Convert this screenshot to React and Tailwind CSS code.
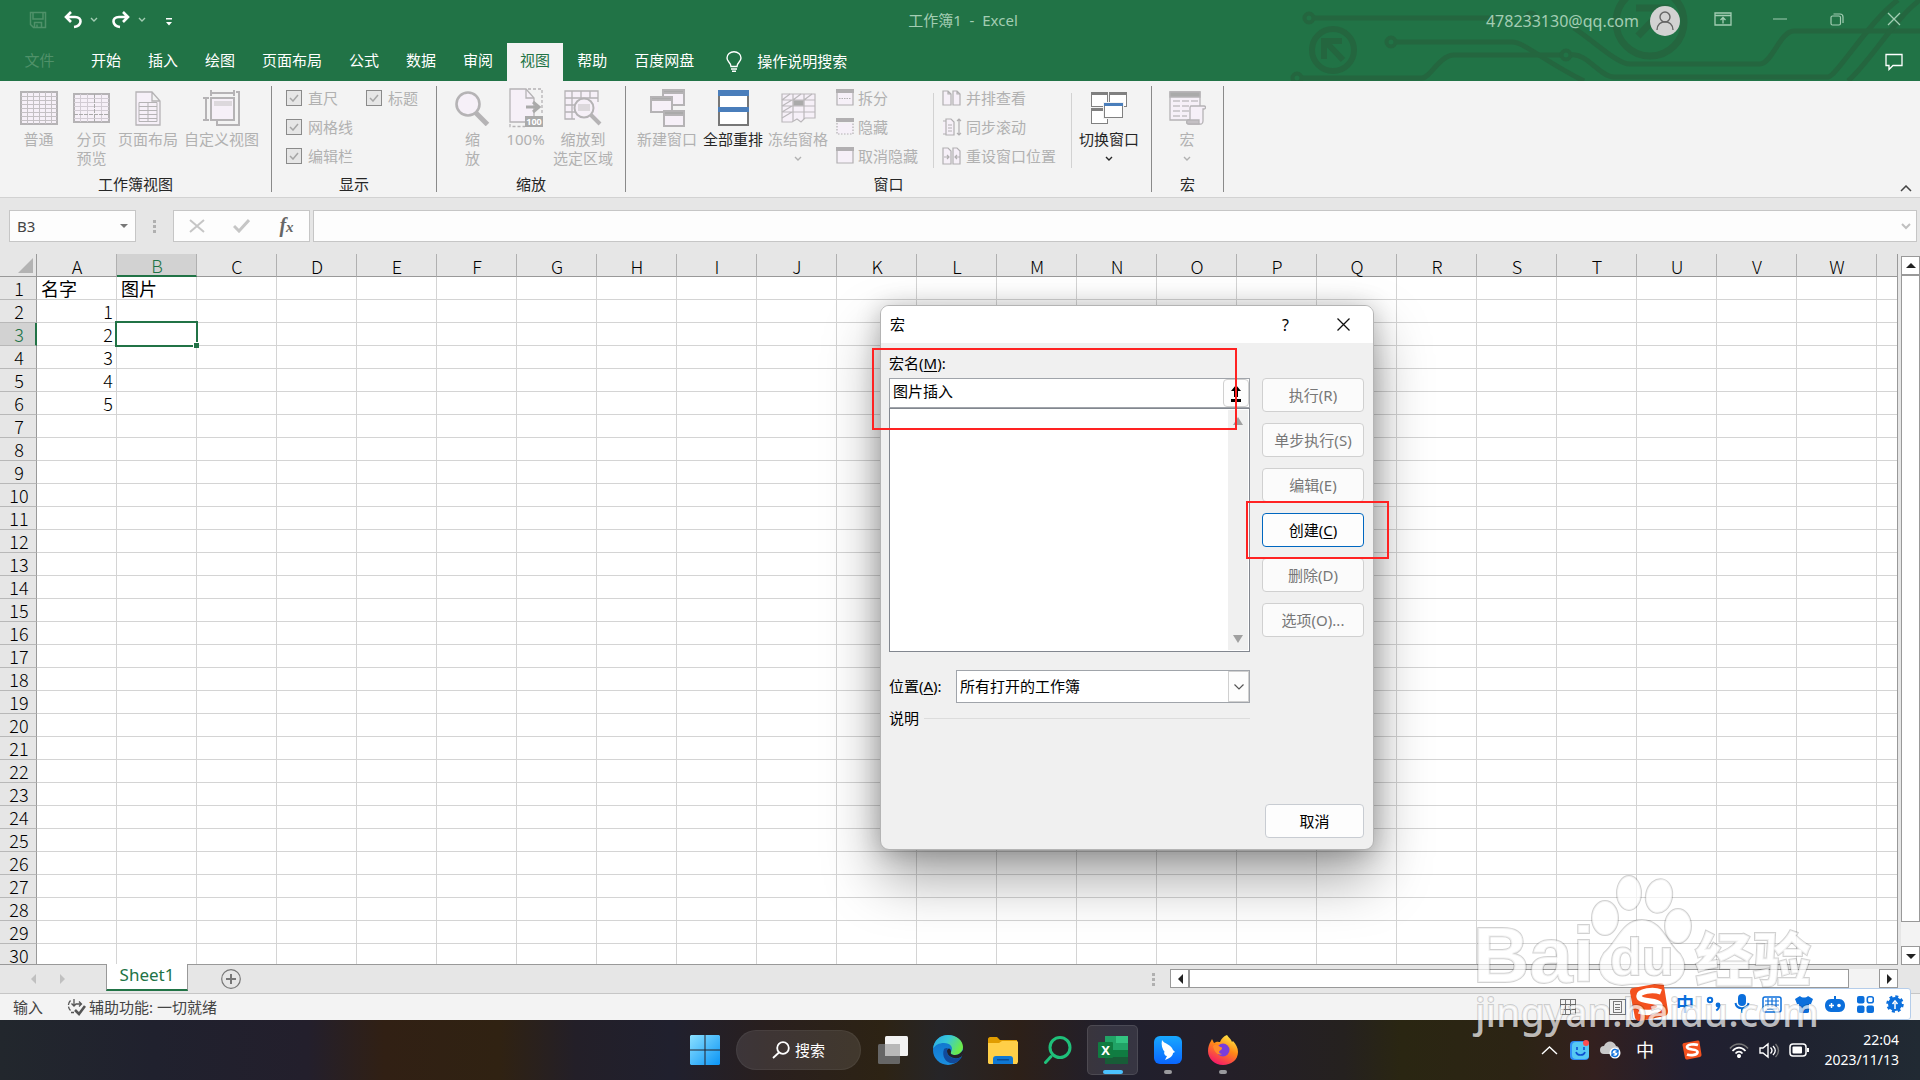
import { useState } from "react";

const columns = "ABCDEFGHIJKLMNOPQRSTUVW".split("");
const rows = Array.from({ length: 30 }, (_, i) => i + 1);

const cells = {
    A1: "名字",
    B1: "图片",
    A2: 1,
    A3: 2,
    A4: 3,
    A5: 4,
    A6: 5
};

const tabs = ["开始", "插入", "绘图", "页面布局", "公式", "数据", "审阅", "视图", "帮助", "百度网盘"];

/* ---------- shared bits ---------- */

function Chevron({ className = "" }) {
    return (
        <svg width="8" height="6" viewBox="0 0 8 6" fill="none" stroke="currentColor" strokeWidth="1.4" className={className}>
            <path d="M1 1l3 3 3-3" />
        </svg>
    );
}

function Dots() {
    return (
        <div className="flex flex-col gap-[2px]">
            <span className="size-[3px] bg-[#b0b0b0]" />
            <span className="size-[3px] bg-[#b0b0b0]" />
            <span className="size-[3px] bg-[#b0b0b0]" />
        </div>
    );
}

/* ---------- title bar ---------- */

function Circuit() {
    return (
        <svg className="absolute right-0 top-0" width="640" height="81" viewBox="0 0 640 81" fill="none" stroke="#24663f" strokeWidth="5">
            <circle cx="29" cy="18" r="4.500" strokeWidth="4" />
            <path d="M34 18H218" />
            <circle cx="111" cy="42" r="4.500" strokeWidth="4" />
            <path d="M116 42H232C244 42 262 60 304 81" />
            <circle cx="17" cy="78" r="4.500" strokeWidth="4" />
            <path d="M22 78H142C150 78 160 55 174 55H281" />
            <circle cx="286" cy="55" r="4.500" strokeWidth="4" />
            <path d="M291 55C306 52 320 77 334 77H548C556 77 590 20 618 0" />
            <circle cx="251" cy="17" r="4.500" strokeWidth="4" />
            <path d="M294 28C320 46 338 64 350 64H480C492 64 500 31 514 31H640" />
            <path d="M568 81C590 62 615 18 640 0" />
            <circle cx="53" cy="50" r="21" strokeWidth="6" />
            <path d="M62 41H44V59M46 42L63 60" strokeWidth="6" />
            <circle cx="370" cy="22" r="34" strokeWidth="7" />
            <path d="M356 8H386V22M384 9L358 36" strokeWidth="7" />
        </svg>
    );
}

function TitleBar() {
    return (
        <div className="relative flex h-[43px] items-center text-[#a3cdb3]">
            <div className="flex flex-1 items-center pb-[3px] pl-[29px]">
                <button aria-label="保存" className="text-[#4f9169]">
                    <svg width="18" height="18" viewBox="0 0 18 18" fill="none" stroke="currentColor" strokeWidth="1.500">
                        <path d="M1.500 1.500h15v15h-12l-3-3zM4 1.500V8h10V1.500M5.500 16.500v-5h7v5M8 16v-2.500" />
                    </svg>
                </button>
                <button aria-label="撤消" className="ml-4 text-white">
                    <svg width="20" height="18" viewBox="0 0 20 18" fill="none" stroke="currentColor" strokeWidth="2.600">
                        <path d="M8 1L3 6l5 5M3 6h9c8 0 7 9-1 10" />
                    </svg>
                </button>
                <Chevron className="ml-[7px]" />
                <button aria-label="恢复" className="ml-[13px] text-white">
                    <svg width="20" height="18" viewBox="0 0 20 18" fill="none" stroke="currentColor" strokeWidth="2.600">
                        <path d="M12 1l5 5-5 5M17 6H8C0 6 1 15 9 16" />
                    </svg>
                </button>
                <Chevron className="ml-[7px]" />
                <button aria-label="自定义快速访问工具栏" className="ml-[19px] mt-[3px] text-white">
                    <svg width="8" height="8" viewBox="0 0 8 8" fill="currentColor">
                        <path d="M1 0h6v1.500H1zM1 4h6L4 7.500z" />
                    </svg>
                </button>
            </div>
            <div className="whitespace-pre pb-[3px] pr-1 text-[15px]">工作簿1  -  Excel</div>
            <div className="flex flex-1 items-center justify-end pb-px pr-[19px]">
                <span className="text-[16px]">478233130@qq.com</span>
                <svg width="30" height="30" viewBox="0 0 30 30" className="ml-[11px]" aria-label="帐户">
                    <circle cx="15" cy="15" r="15" fill="#d2d2d2" />
                    <g fill="none" stroke="#666" strokeWidth="1.400">
                        <circle cx="15" cy="11" r="5" />
                        <path d="M7 24c0-11 16-11 16 0" />
                    </g>
                </svg>
                <button aria-label="功能区显示选项" className="ml-[34px] pb-[4px]">
                    <svg width="18" height="14" viewBox="0 0 18 14" fill="none" stroke="currentColor" strokeWidth="1.300">
                        <path d="M1 1h16v12H1zM1 3.500h16M9 11.500V6M6.500 8L9 5.500 11.500 8" />
                    </svg>
                </button>
                <button aria-label="最小化" className="ml-[41px] pb-[5px]">
                    <svg width="14" height="2" viewBox="0 0 14 2"><path d="M0 .5h14v1H0z" fill="currentColor" /></svg>
                </button>
                <button aria-label="还原" className="ml-[43px] pb-[4px]">
                    <svg width="14" height="13" viewBox="0 0 14 13" fill="none" stroke="currentColor" strokeWidth="1.200">
                        <rect x="1" y="3" width="9.500" height="9" rx="1.500" />
                        <path d="M3.500 1H10a3 3 0 013 3v6" />
                    </svg>
                </button>
                <button aria-label="关闭" className="ml-[43px] pb-[4px]">
                    <svg width="14" height="14" viewBox="0 0 14 14" stroke="currentColor" strokeWidth="1.300"><path d="M1 1l12 12M13 1L1 13" /></svg>
                </button>
            </div>
        </div>
    );
}

function TabBar({ active, onChange }) {
    return (
        <div className="relative flex h-[38px] items-stretch text-[15px] text-white">
            <button className="w-[78px] pb-[3px] pl-px text-[#4f9169]">文件</button>
            {tabs.map((tab) => (
                <button
                    key={tab}
                    onClick={() => onChange(tab)}
                    className={tab === active ? "mr-px bg-[#f3f3f3] px-[13px] pb-[3px] text-[#217346]" : "mr-px px-[13px] pb-[3px]"}
                >
                    {tab}
                </button>
            ))}
            <button className="ml-[18px] flex items-center gap-[15px] pb-[2px]">
                <svg width="16" height="21" viewBox="0 0 16 21" fill="none" stroke="currentColor" strokeWidth="1.400">
                    <path d="M5 15.500c0-4-4-4.500-4-8.500a7 6.300 0 0114 0c0 4-4 4.500-4 8.500zM5 18h6M6 20.300h4" />
                </svg>
                操作说明搜索
            </button>
            <button aria-label="批注" className="ml-auto pr-[17px]">
                <svg width="18" height="18" viewBox="0 0 18 18" fill="none" stroke="currentColor" strokeWidth="1.300">
                    <path d="M1 1.500h16v11H8l-4 4v-4H1z" />
                </svg>
            </button>
        </div>
    );
}

/* ---------- ribbon icons ---------- */

const NormalIcon = () => (
    <svg width="38" height="34" viewBox="0 0 38 34" fill="#f6f0f8" stroke="#b5b3b5" shapeRendering="crispEdges">
        <path d="M1 1h36v32H1z" strokeWidth="1.500" />
        <path fill="none" stroke="#c4c0c4" d="M1 5.500h36M1 9.500h36M1 13.500h36M1 17.500h36M1 21.500h36M1 25.500h36M1 29.500h36M7.500 1v32M13.500 1v32M19.500 1v32M25.500 1v32M31.500 1v32" />
    </svg>
);

const PageBreakIcon = () => (
    <svg width="37" height="30" viewBox="0 0 37 30" fill="#f6f0f8" stroke="#b5b3b5" shapeRendering="crispEdges">
        <path d="M1 1h35v28H1z" strokeWidth="1.500" />
        <path fill="none" stroke="#d2ccd4" d="M1 5.500h35M1 9.500h35M1 13.500h35M1 17.500h35M1 25.500h35M7.500 1v28M14.500 1v28M28.500 1v28" />
        <path fill="none" stroke="#aaa" strokeDasharray="4 1" d="M21.500 1v28M1 21.500h35" />
    </svg>
);

const PageLayoutIcon = () => (
    <svg width="26" height="35" viewBox="0 0 26 35" fill="#f6f0f8" stroke="#b5b3b5" strokeWidth="1.300">
        <path d="M1 1h16l8 9v24H1zM17 1v9h8" />
        <path d="M4 11.500h18v19H4zM4 15.500h18M4 19.500h18M4 23.500h18M4 27.500h18M13 11.500v19" strokeWidth="1" />
    </svg>
);

const CustomViewIcon = () => (
    <svg width="37" height="36" viewBox="0 0 37 36" fill="none" stroke="#b5b3b5" strokeWidth="1.300" shapeRendering="crispEdges">
        <path d="M8 3h23M8 0v6M31 0v6M3 8v22M0 8h6M0 30h6M33 2h3v33H14v-4" />
        <path d="M8 8h23v22H8z" fill="#f6f0f8" />
        <path d="M10.500 10.500h18v5h-18z" fill="#dcd8dc" stroke="none" />
    </svg>
);

const ZoomIcon = () => (
    <svg width="35" height="35" viewBox="0 0 35 35" fill="none" stroke="#b5b3b5">
        <circle cx="13" cy="13" r="11.500" strokeWidth="2.600" fill="#f6f0f8" />
        <path d="M21 22l11.500 11.500" strokeWidth="5" />
    </svg>
);

const HundredIcon = () => (
    <svg width="34" height="40" viewBox="0 0 34 40" fill="none" stroke="#b5b3b5" strokeWidth="1.300">
        <path d="M1 1h16l8 9v24H1z" fill="#f6f0f8" />
        <path d="M17 1v9h8" />
        <path d="M19 1h14v26M1 36v2.500h15" strokeDasharray="3 2" />
        <path d="M17 19h13M24 14l6 5-6 5" strokeWidth="3" stroke="#aaa" />
        <path d="M16 28h18v11H16z" fill="#aaa" stroke="none" />
        <text x="25" y="37" textAnchor="middle" fontSize="9" fontWeight="700" fill="#fff" stroke="none">100</text>
    </svg>
);

const ZoomSelectionIcon = () => (
    <svg width="38" height="36" viewBox="0 0 38 36" fill="none" stroke="#b5b3b5" strokeWidth="1.300">
        <path d="M1 1h33v28H10l-4 2-1-2H1z" fill="#f6f0f8" stroke="none" />
        <path d="M34 12V1H1v28h10M1 8h33M1 15h10M1 22h10M8 1v28M17 1v7M26 1v7" />
        <circle cx="20" cy="18" r="9.500" fill="#f6f0f8" strokeWidth="2" />
        <path d="M14 14h12v7H14z" fill="#dcd8dc" stroke="none" />
        <path d="M27 25l9 9" strokeWidth="4" />
    </svg>
);

const NewWindowIcon = () => (
    <svg width="35" height="38" viewBox="0 0 35 38" fill="#f6f0f8" stroke="#b5b3b5" strokeWidth="1.300" shapeRendering="crispEdges">
        <path d="M13 1h21v15H13z" /><path d="M13 1h21v3H13z" fill="#aaa" />
        <path d="M1 8h21v15H1z" /><path d="M1 8h21v3H1z" fill="#aaa" />
        <path d="M14 22h20v15H14z" /><path d="M14 22h20v4H14z" fill="#aaa" />
    </svg>
);

const ArrangeIcon = () => (
    <svg width="31" height="36" viewBox="0 0 31 36" shapeRendering="crispEdges">
        <path d="M1 1h29v34H1z" fill="#fff" stroke="#777" strokeWidth="1.500" />
        <path d="M0 0h31v6H0zM0 17h31v5H0z" fill="#4a7ebb" />
    </svg>
);

const FreezeIcon = () => (
    <svg width="35" height="30" viewBox="0 0 35 30" fill="none" stroke="#bbb8bb" strokeWidth="1.200">
        <path d="M1 1h33v24H24l-4 4-4-3-5 3H1z" fill="#f6f0f8" />
        <path d="M1 7h33M1 13h33M1 19h33M12 1v27M23 1v25M1 7l8-6M12 7l8-6M23 7l8-6M1 13l10-6M1 19l10-6M1 25l10-6" />
        <path d="M12.500 7.500h10v5h-10z" fill="#aaa" />
    </svg>
);

const SwitchIcon = () => (
    <svg width="36" height="32" viewBox="0 0 36 32" fill="#fff" stroke="#808080" shapeRendering="crispEdges">
        <path d="M.5.5h16v14H.5zM18.500.5h17v14h-17zM.5 16.500h16v15H.5z" />
        <path d="M0 0h17v3H0zM18 0h18v3H18zM0 16h17v3H0z" fill="#808080" stroke="none" />
        <path d="M12 10h21v17H12z" fill="#f3f3f3" stroke="none" />
        <path d="M13.500 11.500h18v14h-18z" />
        <path d="M13 11h19v3H13z" fill="#4a7ebb" stroke="none" />
    </svg>
);

const MacroIcon = () => (
    <svg width="37" height="34" viewBox="0 0 37 34" fill="#f6f0f8" stroke="#b5b3b5" strokeWidth="1.300">
        <path d="M1 1h30v28H1z" />
        <path d="M1 1h30v5H1z" fill="#aaa" />
        <path d="M4 10h7M13 10h7M22 10h7M4 15h7M13 15h7M4 20h7M13 20h7M4 25h7M13 25h5" stroke="#c4c0c4" />
        <path d="M22 15h13c2 0 2 3 0 3h-1v12c0 4-3 3-3 3H20c-3 0-3-4 0-4h1V18c0-2 0-3 1-3z" />
        <path d="M19 29h11v4H20c-3 0-3-3-1-4z" fill="#c4c0c4" />
    </svg>
);

const smallIcons = {
    split: <><path d="M1 1h16v15H1z" /><path d="M3 9.500h12" strokeDasharray="1.500 1" /></>,
    hide: <path d="M1 5v11h16V5" strokeDasharray="1.500 1.500" />,
    unhide: <path d="M1 1h16v15H1z" />,
    side: <path d="M1 2h5l3 3v11H1zM11 2h4l3 3v11h-7zM6 2v3h3M15 2v3h3" />,
    sync: <path d="M1 3h3v13H1M4 1h5l3 3v13H4zM6 7h4M6 10h4M6 13h4M17 1v16M15 3l2-2 2 2M15 15l2 2 2-2" />,
    reset: <path d="M1 1h5l3 3v13H1zM11 1h4l3 3v13h-7zM2 10h5M5 8l2 2-2 2M18 10h-5M15 8l-2 2 2 2" />
};

function SmallButton({ icon, children }) {
    const isWindow = icon === "split" || icon === "hide" || icon === "unhide";
    return (
        <button className="flex h-6 items-center gap-1 text-[15px] text-[#b1b1b1]">
            <svg width={isWindow ? 18 : 20} height="18" viewBox={isWindow ? "0 0 18 18" : "0 0 20 18"} fill="#f6f0f8" stroke="#b1afb1" strokeWidth="1.200">
                {smallIcons[icon]}
                {isWindow && <path d="M0 0h18v4H0z" fill="#b1afb1" stroke="none" />}
            </svg>
            {children}
        </button>
    );
}

function BigButton({ icon, lines, className, dropdown = false, enabled = false }) {
    return (
        <button className={`flex shrink-0 flex-col items-center text-[15px] leading-[19px] whitespace-nowrap ${enabled ? "text-[#262626]" : "text-[#b1b1b1]"} ${className}`}>
            <span className="flex h-11 items-center">{icon}</span>
            {lines.map((line) => (
                <span key={line}>{line}</span>
            ))}
            {dropdown && <Chevron className="mt-[7px]" />}
        </button>
    );
}

function RibbonGroup({ label, className, children }) {
    return (
        <section aria-label={label} className={`flex shrink-0 flex-col justify-between border-r border-[#8a8a8a] ${className}`}>
            <div className="flex">{children}</div>
            <div className="pb-px text-center text-[15px] leading-[14px] text-[#262626]">{label}</div>
        </section>
    );
}

function RibbonCheck({ children }) {
    return (
        <label className="relative flex h-6 items-center gap-[6px] text-[15px] text-[#b1b1b1]">
            <input type="checkbox" defaultChecked disabled className="size-4 appearance-none border border-[#8a8a8a] bg-[#e6e6e6]" />
            <svg width="10" height="8" viewBox="0 0 10 8" fill="none" stroke="#a6a6a6" strokeWidth="1.500" className="absolute left-[3px]">
                <path d="M1 4l3 3 5-6" />
            </svg>
            {children}
        </label>
    );
}

function Ribbon() {
    return (
        <div className="flex h-[117px] border-b border-[#d2d2d2] bg-[#f3f3f3] py-[5px]">
            <RibbonGroup label="工作簿视图" className="w-[272px]">
                <BigButton icon={<NormalIcon />} lines={["普通"]} className="ml-3 w-[53px]" />
                <BigButton icon={<PageBreakIcon />} lines={["分页", "预览"]} className="w-[53px]" />
                <BigButton icon={<PageLayoutIcon />} lines={["页面布局"]} className="w-[60px]" />
                <BigButton icon={<CustomViewIcon />} lines={["自定义视图"]} className="w-[87px]" />
            </RibbonGroup>
            <RibbonGroup label="显示" className="w-[165px]">
                <div className="ml-[14px] flex w-[80px] flex-col gap-[5px]">
                    <RibbonCheck>直尺</RibbonCheck>
                    <RibbonCheck>网格线</RibbonCheck>
                    <RibbonCheck>编辑栏</RibbonCheck>
                </div>
                <RibbonCheck>标题</RibbonCheck>
            </RibbonGroup>
            <RibbonGroup label="缩放" className="w-[189px]">
                <BigButton icon={<ZoomIcon />} lines={["缩", "放"]} className="ml-[9px] w-[53px]" />
                <BigButton icon={<HundredIcon />} lines={["100%"]} className="w-[53px]" />
                <BigButton icon={<ZoomSelectionIcon />} lines={["缩放到", "选定区域"]} className="w-[62px]" />
            </RibbonGroup>
            <RibbonGroup label="窗口" className="w-[526px]">
                <BigButton icon={<NewWindowIcon />} lines={["新建窗口"]} className="ml-2 w-[66px]" />
                <BigButton icon={<ArrangeIcon />} lines={["全部重排"]} enabled className="w-[66px]" />
                <BigButton icon={<FreezeIcon />} lines={["冻结窗格"]} dropdown className="w-[64px]" />
                <div className="ml-[6px] flex w-[97px] flex-col gap-[5px] whitespace-nowrap">
                    <SmallButton icon="split">拆分</SmallButton>
                    <SmallButton icon="hide">隐藏</SmallButton>
                    <SmallButton icon="unhide">取消隐藏</SmallButton>
                </div>
                <div className="mt-[7px] w-px bg-[#d2d2d2]" />
                <div className="ml-2 flex w-[129px] flex-col gap-[5px] whitespace-nowrap">
                    <SmallButton icon="side">并排查看</SmallButton>
                    <SmallButton icon="sync">同步滚动</SmallButton>
                    <SmallButton icon="reset">重设窗口位置</SmallButton>
                </div>
                <div className="mt-[7px] w-px bg-[#d2d2d2]" />
                <BigButton icon={<SwitchIcon />} lines={["切换窗口"]} dropdown enabled className="w-[74px]" />
            </RibbonGroup>
            <RibbonGroup label="宏" className="w-[72px]">
                <BigButton icon={<MacroIcon />} lines={["宏"]} dropdown className="w-[70px]" />
            </RibbonGroup>
            <button aria-label="折叠功能区" className="ml-auto self-end pr-2 text-[#444]">
                <svg width="12" height="7" viewBox="0 0 12 7" fill="none" stroke="currentColor" strokeWidth="1.500"><path d="M1 6l5-5 5 5" /></svg>
            </button>
        </div>
    );
}

/* ---------- formula bar ---------- */

function FormulaBar() {
    return (
        <div className="flex h-14 items-center gap-[3px] pl-[9px] pr-[3px]">
            <div className="flex h-8 w-[127px] items-center border border-[#c6c6c6] bg-[#fdfdfd] px-[7px]">
                <input aria-label="名称框" defaultValue="B3" className="w-0 flex-1 bg-transparent text-[15px] text-[#444] outline-none" />
                <svg width="8" height="4" viewBox="0 0 8 4" fill="#777"><path d="M0 0h8L4 4z" /></svg>
            </div>
            <div className="flex w-[31px] justify-center"><Dots /></div>
            <div className="grid h-8 w-[137px] grid-cols-3 items-center justify-items-center border border-[#c6c6c6] bg-[#fdfdfd]">
                <button aria-label="取消输入">
                    <svg width="16" height="14" viewBox="0 0 16 14" stroke="#c6c6c6" strokeWidth="2"><path d="M1 1l14 12M15 1L1 13" /></svg>
                </button>
                <button aria-label="确认输入">
                    <svg width="17" height="14" viewBox="0 0 17 14" fill="none" stroke="#c6c6c6" strokeWidth="3"><path d="M1 7l5 5L16 1" /></svg>
                </button>
                <button aria-label="插入函数" className="font-['Liberation_Serif',serif] text-[20px] leading-5 font-bold italic text-[#666]">
                    f<span className="text-[15px]">x</span>
                </button>
            </div>
            <div className="flex h-8 flex-1 items-center border border-[#c6c6c6] bg-[#fdfdfd] pr-[5px]">
                <input aria-label="编辑栏" className="w-0 flex-1 bg-transparent px-2 text-[15px] outline-none" />
                <svg width="10" height="7" viewBox="0 0 10 7" fill="none" stroke="#c0c0c0" strokeWidth="2"><path d="M1 1l4 4 4-4" /></svg>
            </div>
        </div>
    );
}

/* ---------- sheet ---------- */

function Sheet() {
    return (
        <div className="min-w-0 flex-1 overflow-hidden border-b border-r border-[#999]">
            <table className="w-full table-fixed border-separate border-spacing-0 font-['Noto_Sans_CJK_SC',sans-serif] text-[18px] leading-[22px] text-black">
                <colgroup>
                    <col className="w-[37px]" />
                    {columns.map((c) => (
                        <col key={c} className="w-[80px]" />
                    ))}
                    <col />
                </colgroup>
                <thead>
                    <tr className="h-[23px]">
                        <th className="border-b border-r border-[#999] bg-[#e6e6e6] p-0">
                            <svg width="15" height="15" viewBox="0 0 15 15" className="ml-auto mr-[3px]"><path d="M15 0v15H0z" fill="#b3b3b3" /></svg>
                        </th>
                        {columns.map((c) => (
                            <th
                                key={c}
                                className={
                                    c === "B"
                                        ? "border-b-2 border-r border-b-[#217346] border-r-[#b0b0b0] bg-[#d2d2d2] p-0 pl-px font-light text-[#217346]"
                                        : "border-b border-r border-b-[#999] border-r-[#b0b0b0] bg-[#e6e6e6] p-0 pl-px font-light"
                                }
                            >
                                <div className="h-[21px] leading-[22px]">{c}</div>
                            </th>
                        ))}
                        <th className="border-b border-[#999] bg-[#e6e6e6] p-0" />
                    </tr>
                </thead>
                <tbody>
                    {rows.map((r) => (
                        <tr key={r} className="h-[23px]">
                            <th
                                className={
                                    r === 3
                                        ? "border-b border-r-2 border-b-[#b8b8b8] border-r-[#217346] bg-[#d2d2d2] p-0 pl-[3px] font-light text-[#217346]"
                                        : "border-b border-r border-b-[#b8b8b8] border-r-[#999] bg-[#e6e6e6] p-0 pl-[2px] font-light"
                                }
                            >
                                <div className="h-[22px] leading-[23px]">{r}</div>
                            </th>
                            {columns.map((c) => {
                                const value = cells[c + r];
                                return (
                                    <td key={c} className="relative border-b border-r border-[#d4d4d4] bg-white p-0">
                                        {value !== undefined && (
                                            <div className={typeof value === "number" ? "h-[22px] pr-[3px] text-right leading-[23px] font-light" : "h-[22px] pl-1 leading-[23px]"}>
                                                {value}
                                            </div>
                                        )}
                                        {c + r === "B3" && (
                                            <div className="absolute -inset-[2px] z-10 border-2 border-[#217346]">
                                                <span className="absolute -bottom-[3px] -right-[3px] size-[6px] border-l border-t border-white bg-[#217346]" />
                                            </div>
                                        )}
                                    </td>
                                );
                            })}
                            <td className="border-b border-[#d4d4d4] bg-white p-0" />
                        </tr>
                    ))}
                </tbody>
            </table>
        </div>
    );
}

function ScrollButton({ label, d }) {
    return (
        <button aria-label={label} className="flex size-[19px] shrink-0 items-center justify-center border border-[#999] bg-white">
            <svg width="10" height="10" viewBox="0 0 10 10" fill="#222"><path d={d} /></svg>
        </button>
    );
}

function VerticalScroll() {
    return (
        <div className="ml-[3px] flex w-[19px] flex-col pt-[2px]">
            <ScrollButton label="向上滚动" d="M0 7h10L5 2z" />
            <div className="flex-1 border border-[#999] bg-white" />
            <div className="h-6 bg-[#f3f3f3]" />
            <ScrollButton label="向下滚动" d="M0 3h10L5 8z" />
        </div>
    );
}

function SheetTabs() {
    return (
        <div className="flex h-7 pr-[22px]">
            <div className="flex w-[106px] items-center gap-6 pl-[31px]">
                <svg width="5" height="10" viewBox="0 0 5 10" fill="#c0c0c0"><path d="M5 0v10L0 5z" /></svg>
                <svg width="5" height="10" viewBox="0 0 5 10" fill="#c0c0c0"><path d="M0 0v10l5-5z" /></svg>
            </div>
            <button className="-mt-px h-[27px] w-[82px] border-x border-b-2 border-x-[#999] border-b-[#217346] bg-white pb-1 text-[17px] leading-5 text-[#217346]">
                Sheet1
            </button>
            <button aria-label="新工作表" className="ml-[33px]">
                <svg width="20" height="20" viewBox="0 0 20 20" fill="none" stroke="#777">
                    <circle cx="10" cy="10" r="9.300" strokeWidth="1.200" />
                    <path d="M5 10h10M10 5v10" strokeWidth="2" />
                </svg>
            </button>
            <div className="ml-auto mr-[15px] flex items-center"><Dots /></div>
            <div className="mt-1 flex h-[19px] w-[728px] bg-[#f3f3f3]">
                <ScrollButton label="向左滚动" d="M8 0v10L3 5z" />
                <div className="mr-[30px] flex-1 border border-[#999] bg-white" />
                <ScrollButton label="向右滚动" d="M3 0v10l5-5z" />
            </div>
        </div>
    );
}

function StatusBar() {
    return (
        <div className="flex h-[27px] items-center border-t border-[#c6c6c6] bg-[#f3f3f3] pl-[13px] text-[15px] text-[#444]">
            <span>输入</span>
            <svg width="20" height="18" viewBox="0 0 20 18" fill="none" stroke="#555" strokeWidth="1.300" className="ml-[23px] mr-[3px]">
                <path d="M4.500 2.500a7 7 0 000 10" strokeDasharray="5 1.500" />
                <path d="M5 14.500h3M8 1v7M5.500 5.500L8 8l2.500-2.500M10 6h5M13 3.500L15.500 6 13 8.500" />
                <path d="M9 12l4 4 6-8" strokeWidth="2.600" />
            </svg>
            <span>辅助功能: 一切就绪</span>
            <div className="ml-auto flex w-[360px] items-center gap-[33px]">
                <svg width="16" height="16" viewBox="0 0 16 16" fill="none" stroke="#777" shapeRendering="crispEdges">
                    <path d="M.5.5h15v15H.5zM.5 5.500h15M.5 10.500h15M5.500.5v15M10.500.5v15" />
                </svg>
                <svg width="17" height="16" viewBox="0 0 17 16" fill="none" stroke="#777" shapeRendering="crispEdges">
                    <path d="M.5.5h16v15H.5zM4.500 2.500h8v11h-8zM6 5.500h5M6 8h5M6 10.500h5" />
                </svg>
            </div>
        </div>
    );
}

/* ---------- macro dialog ---------- */

const macroActions = [
    { label: "执行", hotkey: "R" },
    { label: "单步执行", hotkey: "S" },
    { label: "编辑", hotkey: "E" },
    { label: "创建", hotkey: "C", enabled: true },
    { label: "删除", hotkey: "D" },
    { label: "选项", hotkey: "O", more: true }
];

function MacroDialog() {
    const [name, setName] = useState("图片插入");

    return (
        <div
            role="dialog"
            aria-label="宏"
            className="absolute left-[880px] top-[305px] z-20 w-[494px] rounded-[9px] border border-[#b4b4b4] bg-[#f0f0f0] text-[15px] text-black shadow-[0_28px_56px_rgba(0,0,0,0.36),0_2px_24px_rgba(0,0,0,0.22)]"
        >
            <header className="flex h-[37px] items-center rounded-t-[8px] bg-white pl-[9px] pr-[23px]">
                <span className="mr-auto">宏</span>
                <button aria-label="帮助" className="mr-[48px] text-[16px]">?</button>
                <button aria-label="关闭对话框">
                    <svg width="13" height="13" viewBox="0 0 13 13" stroke="#111" strokeWidth="1.300"><path d="M.5.5l12 12M12.500.5l-12 12" /></svg>
                </button>
            </header>
            <div className="flex h-[506px] justify-between pl-2 pr-[9px] pt-[9px]">
                <div className="flex w-[361px] flex-col">
                    <label htmlFor="macro-name" className="leading-[22px]">
                        宏名(<u className="underline-offset-2">M</u>):
                    </label>
                    <div className="mt-1 flex h-[30px] border border-[#a0a4aa] bg-white">
                        <input
                            id="macro-name"
                            value={name}
                            onChange={(e) => setName(e.target.value)}
                            className="w-0 flex-1 bg-transparent pb-1 pl-[3px] outline-none"
                        />
                        <button aria-label="折叠引用" className="flex w-[26px] items-center justify-center rounded-[4px] border border-[#d0d0d0] bg-[#fdfdfd]">
                            <svg width="10" height="17" viewBox="0 0 10 17"><path d="M5 0l5 6H7v6H3V6H0zM0 14h10v3H0z" fill="#000" /></svg>
                        </button>
                    </div>
                    <div className="flex h-[244px] justify-end border border-[#82878f] bg-white p-px">
                        <div className="flex w-5 flex-col items-center justify-between bg-[#f0f0f0] py-[7px]">
                            <svg width="10" height="8" viewBox="0 0 10 8" fill="#a0a0a0"><path d="M5 0l5 8H0z" /></svg>
                            <svg width="10" height="8" viewBox="0 0 10 8" fill="#a0a0a0"><path d="M5 8l5-8H0z" /></svg>
                        </div>
                    </div>
                    <div className="mt-[18px] flex items-center justify-between">
                        <label htmlFor="macro-place">
                            位置(<u className="underline-offset-2">A</u>):
                        </label>
                        <div className="relative w-[294px]">
                            <select id="macro-place" className="h-[33px] w-full appearance-none border border-[#a0a4aa] bg-white pl-[3px] outline-none">
                                <option>所有打开的工作簿</option>
                            </select>
                            <span className="pointer-events-none absolute inset-y-px right-px flex w-[21px] items-center justify-center border border-[#d0d0d0] bg-[#fdfdfd]">
                                <svg width="10" height="6" viewBox="0 0 10 6" fill="none" stroke="#555" strokeWidth="1.200"><path d="M.5.5L5 5 9.500.5" /></svg>
                            </span>
                        </div>
                    </div>
                    <div className="mt-1 flex items-center gap-[5px] leading-[22px]">
                        说明
                        <span className="h-px flex-1 bg-[#dcdcdc]" />
                    </div>
                </div>
                <div className="flex w-[102px] flex-col gap-[11px] pb-[11px] pt-[26px]">
                    {macroActions.map(({ label, hotkey, enabled, more }) => (
                        <button
                            key={hotkey}
                            disabled={!enabled}
                            className={
                                enabled
                                    ? "h-[34px] rounded-[4px] border border-[#0067c0] bg-[#fdfdfd]"
                                    : "h-[34px] rounded-[4px] border border-[#d0d0d0] bg-[#fbfbfb] text-[#777]"
                            }
                        >
                            {label}({enabled ? <u className="underline-offset-2">{hotkey}</u> : hotkey}){more && "..."}
                        </button>
                    ))}
                    <button className="mt-auto ml-[3px] h-[34px] rounded-[4px] border border-[#c8ccd2] bg-[#fdfdfd]">取消</button>
                </div>
            </div>
        </div>
    );
}

/* ---------- input method toolbar ---------- */

function SogouLogo({ size }) {
    return (
        <svg width={size} height={size} viewBox="0 0 40 40">
            <path d="M4 6L31 1c3 0 4 1 4 3l4 25c0 3-1 4-3 5L11 39c-3 0-4-1-5-3L1 10c0-2 1-4 3-4z" fill="#f4511e" />
            <path d="M32 10c-8-3-22-1-22 4 0 7 21 3 21 10 0 6-13 8-21 5" fill="none" stroke="#fff" strokeWidth="5.500" />
        </svg>
    );
}

function ImeBar() {
    return (
        <div className="absolute bottom-[60px] right-[9px] z-20 flex h-8 w-[279px] items-center rounded-[3px] border border-[#b5cdea] bg-white pr-[6px] text-[#0b6fdc]">
            <span className="-ml-1 mb-1 shrink-0"><SogouLogo size={40} /></span>
            <div className="flex flex-1 items-center justify-between pl-[7px]">
                <span className="text-[18px] leading-5 font-bold">中</span>
                <svg width="16" height="16" viewBox="0 0 16 16" fill="none" stroke="currentColor" strokeWidth="2">
                    <circle cx="4" cy="4" r="2.200" /><circle cx="12" cy="9" r="2.400" fill="currentColor" stroke="none" /><path d="M13.300 9c0 3-1 4-3 5.500" />
                </svg>
                <svg width="16" height="20" viewBox="0 0 16 20" fill="none" stroke="currentColor" strokeWidth="2">
                    <rect x="5" y="1" width="6" height="10" rx="3" fill="currentColor" /><path d="M1.500 9c1 7 12 7 13 0M8 14v5" />
                </svg>
                <svg width="20" height="17" viewBox="0 0 20 17" fill="none" stroke="currentColor" strokeWidth="1.500">
                    <rect x="1" y="1" width="18" height="15" rx="2" /><path d="M3 5h14M3 9h14M6 2v9M10 2v9M14 2v9M5 13h10" strokeWidth="1.200" />
                </svg>
                <svg width="18" height="18" viewBox="0 0 18 18" fill="currentColor"><path d="M5 1c2 2 6 2 8 0l5 3-2 5h-2v7c0 1 0 2-2 2H6c-2 0-2-1-2-2V9H2L0 4z" /></svg>
                <svg width="20" height="18" viewBox="0 0 20 18" fill="currentColor">
                    <path d="M9 1h2v3h3c8 0 8 13 0 13H6C-2 17-2 4 6 4h3z" />
                    <path d="M4 10.500h5M6.500 8v5" stroke="#fff" strokeWidth="1.500" /><circle cx="14" cy="10.500" r="1.800" fill="#fff" />
                </svg>
                <svg width="17" height="17" viewBox="0 0 17 17" fill="currentColor">
                    <rect width="7.500" height="7.500" rx="2" /><rect y="9.500" width="7.500" height="7.500" rx="2" /><rect x="9.500" y="9.500" width="7.500" height="7.500" rx="2" />
                    <rect x="10.300" y=".8" width="6" height="6" rx="2" fill="none" stroke="currentColor" strokeWidth="1.600" />
                </svg>
                <svg width="18" height="18" viewBox="0 0 18 18" fill="currentColor">
                    <circle cx="9" cy="9" r="7" />
                    <circle cx="9" cy="9" r="7.500" fill="none" stroke="currentColor" strokeWidth="2.500" strokeDasharray="3 2.900" />
                    <path d="M9 14V8M6.500 9L9 6l2.500 3" stroke="#fff" strokeWidth="1.500" fill="none" />
                </svg>
            </div>
        </div>
    );
}

/* ---------- taskbar ---------- */

function TaskItem({ label, state = "", children }) {
    return (
        <button
            aria-label={label}
            className={
                state === "active"
                    ? "relative flex h-[50px] w-[51px] items-center justify-center rounded-[5px] border border-white/10 bg-white/10"
                    : "relative flex h-[50px] w-[51px] items-center justify-center"
            }
        >
            {children}
            {state === "active" && <span className="absolute bottom-0 h-1 w-5 rounded-full bg-[#4cc2ff]" />}
            {state === "open" && <span className="absolute bottom-px h-1 w-2 rounded-full bg-[#9a9a9e]" />}
        </button>
    );
}

function Taskbar() {
    return (
        <div className="relative flex h-[60px] shrink-0 items-center justify-center bg-[linear-gradient(90deg,#22272d_0%,#20212e_8%,#231f2c_16%,#312014_20%,#302212_26%,#231f28_30%,#20202e_35%,#291f1e_40%,#2d2314_46%,#262528_49%,#2d2018_53%,#201f2e_58%,#241f28_64%,#25211f_70%,#2a2612_73%,#2c2414_79%,#33201f_83%,#211f30_88%,#1f2230_93%,#212a33_100%)] text-white">
            <div className="flex items-center gap-1 pl-[7px]">
                <TaskItem label="开始菜单">
                    <svg width="30" height="30" viewBox="0 0 30 30">
                        <defs>
                            <linearGradient id="win" x1="0" y1="0" x2="1" y2="1"><stop stopColor="#8be0ff" /><stop offset="1" stopColor="#0a94f5" /></linearGradient>
                        </defs>
                        <path d="M1 0h13.500v14.500H0V1zM15.500 0H29l1 1v13.500H15.500zM0 15.500h14.500V30H1l-1-1zM15.500 15.500H30V29l-1 1H15.500z" fill="url(#win)" />
                    </svg>
                </TaskItem>
                <button className="mx-[2px] flex h-10 w-[125px] items-center justify-center gap-[5px] rounded-full border border-white/5 bg-white/10 text-[15px]">
                    <svg width="18" height="18" viewBox="0 0 18 18" fill="none" stroke="#fff" strokeWidth="1.800"><circle cx="11" cy="7" r="5.800" /><path d="M7 11.500L1 17" /></svg>
                    搜索
                </button>
                <TaskItem label="任务视图">
                    <svg width="30" height="28" viewBox="0 0 30 28">
                        <rect x="7" width="23" height="20" rx="1.500" fill="#f2f2f2" /><rect y="8" width="22" height="20" rx="1.500" fill="#666" />
                        <path d="M7 8h15v12H7z" fill="#b8b8b8" />
                    </svg>
                </TaskItem>
                <TaskItem label="Microsoft Edge">
                    <svg width="30" height="30" viewBox="0 0 30 30">
                        <defs>
                            <linearGradient id="edgeTop" x1="0" y1="0" x2="1" y2=".4"><stop stopColor="#2aa7e6" /><stop offset=".5" stopColor="#38c8d8" /><stop offset="1" stopColor="#6bea4b" /></linearGradient>
                            <linearGradient id="edgeLow" x1="0" y1="0" x2="0" y2="1"><stop stopColor="#0f6fc9" /><stop offset="1" stopColor="#1b8fe0" /></linearGradient>
                        </defs>
                        <circle cx="15" cy="15" r="15" fill="url(#edgeLow)" />
                        <path d="M0 14C1 5 7 0 15 0c9 0 15 6 15 12 0 5-4 8-8 8-3 0-5-1-4-3 3-5-1-9-7-9-5 0-9 2-11 6z" fill="url(#edgeTop)" />
                        <path d="M11 14c-3 8 3 16 11 14 3-1 5-3 7-6-6 3-15 1-15-6 0-1 0-2 1-3-2 0-3 0-4 1z" fill="#114a9b" />
                        <path d="M18 17c-1 2 1 3 4 3 3 0 6-2 8-5v4l-2 3c-6 3-14 0-14-6 0-3 4-4 4 1z" fill="#231f28" />
                    </svg>
                </TaskItem>
                <TaskItem label="文件资源管理器">
                    <svg width="30" height="27" viewBox="0 0 30 27">
                        <path d="M0 2c0-1 1-2 2-2h7l3 3h17v10H0z" fill="#e09c00" /><path d="M0 6h11l3-2h15l1 1v20l-1 2H1l-1-1z" fill="#ffcf48" />
                        <path d="M5 27v-5c0-2 1-3 3-3h14c2 0 3 1 3 3v5z" fill="#0f78d4" /><path d="M9 22h12v1.500H9z" fill="#0a4c94" />
                    </svg>
                </TaskItem>
                <TaskItem label="搜索工具">
                    <svg width="28" height="28" viewBox="0 0 28 28" fill="none" stroke="#1fc07a" strokeWidth="3"><circle cx="16" cy="11.500" r="10" /><path d="M7 20.500L1.500 26.500" strokeLinecap="round" /></svg>
                </TaskItem>
                <TaskItem label="Excel" state="active">
                    <svg width="30" height="28" viewBox="0 0 30 28">
                        <path d="M7 0h11v14H7z" fill="#21a366" /><path d="M18 0h12v7H18z" fill="#33c481" /><path d="M18 7h12v7H18z" fill="#21a366" />
                        <path d="M7 14h11v7H7z" fill="#107c41" /><path d="M18 14h12v7H18z" fill="#107c41" /><path d="M7 21h23v7H7z" fill="#185c37" />
                        <rect y="6" width="15" height="16" rx="1" fill="#107c41" />
                        <text x="7.500" y="19" textAnchor="middle" fontSize="13" fontWeight="700" fill="#fff">X</text>
                    </svg>
                </TaskItem>
                <TaskItem label="飞鸟" state="open">
                    <svg width="28" height="28" viewBox="0 0 28 28">
                        <defs><linearGradient id="bird" x1="0" y1="0" x2="0" y2="1"><stop stopColor="#18a8ff" /><stop offset="1" stopColor="#0a66ff" /></linearGradient></defs>
                        <rect width="28" height="28" rx="6" fill="url(#bird)" />
                        <path d="M8 4c2 4 9 4 11 10l2 2-2 1c0 3-3 5-8 7l2-4c-2 0-3-2-3-4l1 .5C8 13 7 9 8 4z" fill="#fff" />
                    </svg>
                </TaskItem>
                <TaskItem label="Firefox" state="open">
                    <svg width="30" height="30" viewBox="0 0 30 30">
                        <defs><linearGradient id="fox" x1=".8" y1="0" x2=".3" y2="1"><stop stopColor="#fff04a" /><stop offset=".45" stopColor="#ff8a16" /><stop offset="1" stopColor="#f5156c" /></linearGradient></defs>
                        <path d="M19 0c2 3 4 4 5 7l1-1c3 3 5 7 5 11 0 8-7 13-15 13S0 24 0 16c0-4 1-7 3-10l1-2 2 4c3-2 5-1 6-1 1-3 4-6 7-7z" fill="url(#fox)" />
                        <circle cx="15" cy="15" r="6.500" fill="#7a3ddb" />
                        <path d="M5 11c3-3 7 0 7 1 2 0 3 1 1 3-3 1-2 4 1 4-4 2-8-2-9-8z" fill="#ff8a2a" />
                    </svg>
                </TaskItem>
            </div>
            <div className="absolute right-[21px] flex items-center">
                <svg width="17" height="9" viewBox="0 0 17 9" fill="none" stroke="#fff" strokeWidth="1.400"><path d="M1 8l7.500-7L16 8" /></svg>
                <svg width="20" height="20" viewBox="0 0 20 20" className="ml-3">
                    <rect y="1" width="19" height="19" rx="4" fill="#2f8cf5" /><rect x="2" y="2" width="17" height="17" rx="4" fill="#56c8f2" />
                    <path d="M7 7v3M14 7v3M6 12c1 4 8 4 9 0" stroke="#0c4fd0" strokeWidth="1.600" fill="none" /><circle cx="16" cy="3" r="3" fill="#ff4d4f" />
                </svg>
                <svg width="21" height="18" viewBox="0 0 21 18" className="ml-[10px]">
                    <path d="M4 13a4 4 0 010-8c2-6 10-6 12 0 5 1 4 8 0 8z" fill="#c9c9c9" />
                    <circle cx="15" cy="12" r="5.500" fill="#fff" /><path d="M12 12a3 3 0 016-1M18 12a3 3 0 01-6 1M18 8.500V11h-2.500M12 15.500V13h2.500" fill="none" stroke="#0b6fdc" strokeWidth="1.400" />
                </svg>
                <span className="ml-[15px] text-[18px] leading-5">中</span>
                <span className="ml-[28px]"><SogouLogo size={20} /></span>
                <svg width="20" height="16" viewBox="0 0 20 16" fill="none" stroke="#fff" strokeWidth="1.700" className="ml-[27px]">
                    <path d="M1 6.500c5-6 13-6 18 0" stroke="#777" /><path d="M3.500 9c4-4.500 9-4.500 13 0M6.500 11.500c2-2.500 5-2.500 7 0" /><circle cx="10" cy="14" r="1.200" fill="#fff" />
                </svg>
                <svg width="21" height="17" viewBox="0 0 21 17" fill="none" stroke="#fff" strokeWidth="1.400" className="ml-[10px]">
                    <path d="M1 6h3l5-4v13l-5-4H1zM11.500 5.500c2 2 2 4 0 6" /><path d="M14 4c3 3 3 6 0 9" /><path d="M16.500 2c4 4 4 9 0 13" stroke="#777" />
                </svg>
                <svg width="21" height="14" viewBox="0 0 21 14" fill="none" stroke="#fff" strokeWidth="1.500" className="ml-[9px]">
                    <rect x="1" y="1" width="16" height="12" rx="3" /><rect x="3.500" y="3.500" width="9.500" height="7" rx="1" fill="#fff" stroke="none" /><path d="M19 5v4" strokeWidth="2" />
                </svg>
                <div className="ml-[14px] w-[75px] text-right text-[14px] leading-5">
                    <div>22:04</div>
                    <div>2023/11/13</div>
                </div>
            </div>
        </div>
    );
}

/* ---------- overlays ---------- */

function Watermark() {
    return (
        <svg
            className="pointer-events-none absolute bottom-[30px] right-[88px] z-30"
            width="370"
            height="180"
            viewBox="0 0 370 180"
            fill="#fff"
            fillOpacity="0.700"
            stroke="#000"
            strokeOpacity="0.180"
            strokeWidth="2"
            paintOrder="stroke"
            fontFamily="'Liberation Sans', 'Noto Sans CJK SC', sans-serif"
            fontWeight="700"
        >
            <text x="11" y="112" fontSize="78">Bai</text>
            <ellipse cx="143" cy="48" rx="13" ry="17" />
            <ellipse cx="167" cy="23" rx="12" ry="17" />
            <ellipse cx="197" cy="26" rx="13" ry="17" transform="rotate(12 197 26)" />
            <ellipse cx="216" cy="56" rx="13" ry="17" />
            <path d="M180 50c20 0 24 22 38 34 10 14 2 30-16 31-14-2-28-2-42 0-20-1-28-17-18-32 14-12 18-33 38-33z" />
            <text x="148" y="105" fontSize="52">du</text>
            <text x="233" y="111" fontSize="58" fontWeight="900">经验</text>
            <text x="13" y="157" fontSize="39" fontFamily="'Noto Sans', sans-serif" fontWeight="500">jingyan.baidu.com</text>
        </svg>
    );
}

export default function App() {
    const [activeTab, setActiveTab] = useState("视图");

    return (
        <div className="relative flex h-screen flex-col overflow-hidden bg-[#e6e6e6] font-['Noto_Sans','Noto_Sans_CJK_SC',sans-serif]">
            <header className="relative bg-[#217346]">
                <Circuit />
                <TitleBar />
                <TabBar active={activeTab} onChange={setActiveTab} />
            </header>
            <Ribbon />
            <FormulaBar />
            <main className="flex min-h-0 flex-1">
                <Sheet />
                <VerticalScroll />
            </main>
            <SheetTabs />
            <StatusBar />
            <Taskbar />
            <MacroDialog />
            {/* highlight frames around the name field and the create button */}
            <div className="pointer-events-none absolute left-[872px] top-[348px] z-30 h-[82px] w-[365px] border-2 border-[#f22]" />
            <div className="pointer-events-none absolute left-[1246px] top-[501px] z-30 h-[58px] w-[143px] border-2 border-[#f22]" />
            <ImeBar />
            <Watermark />
        </div>
    );
}
